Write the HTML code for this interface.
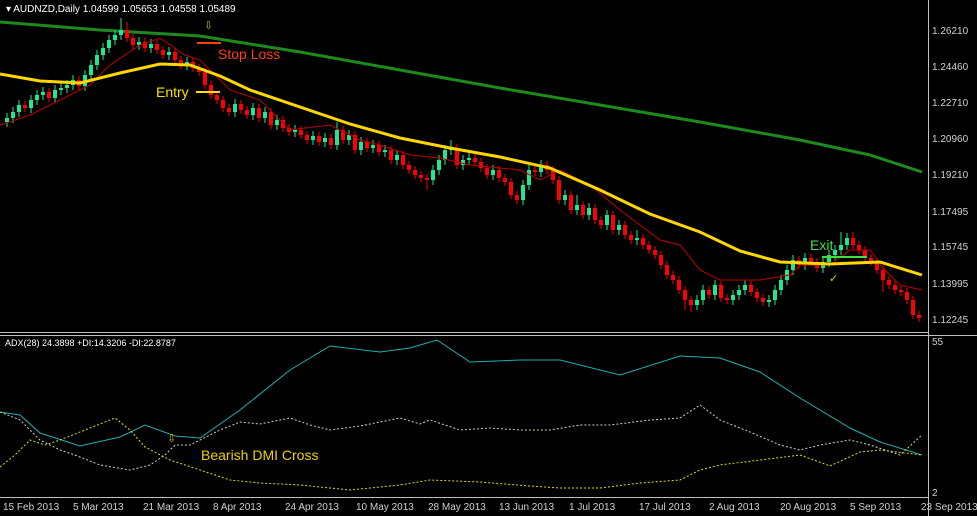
<!DOCTYPE html>
<html><head><meta charset="utf-8"><style>
html,body{margin:0;padding:0;background:#000;width:977px;height:516px;overflow:hidden}
svg{display:block}
text{font-family:"Liberation Sans",sans-serif;}
</style></head><body>
<svg width="977" height="516" viewBox="0 0 977 516" xmlns="http://www.w3.org/2000/svg">
<rect width="977" height="516" fill="#000"/>
<polyline fill="none" stroke="#1e8a1e" stroke-width="3" points="0,22 100,30 200,36 300,52 400,70 500,88 600,105 700,122 800,140 870,155 922,172"/>
<g fill="none">
<path stroke="#1fe890" stroke-width="1" d="M7 113V127M13 107V123M19 100V117M31 95V113M37 90V105M43 87V100M55 85V103M61 83V95M67 80V93M73 75V90M85 70V91M91 60V80M97 50V70M103 43V60M109 35V53M115 30V45M121 18V40M139 37V50M151 39V53M169 47V60M187 57V70M235 99V117M253 103V120M265 107V123M277 115V130M295 125V137M313 131V145M325 133V147M337 122V150M349 130V145M361 137V155M373 140V153M385 145V157M397 150V165M433 165V185M439 155V175M445 145V165M451 140V155M463 155V170M469 153V165M493 165V180M523 180V205M529 165V190M541 160V177M565 190V205M577 195V215M589 203V220M607 210V230M619 220V235M637 230V245M697 295V310M703 285V305M715 280V300M733 290V305M739 285V300M745 280V295M769 295V307M775 285V305M781 275V295M787 265V285M793 255V275M805 253V270M823 257V273M829 250V267M835 245V260M841 232V255M847 233V250"/>
<path stroke="#1fe890" stroke-width="4" d="M7 118V122M13 112V118M19 105V112M31 100V108M37 95V100M43 92V95M55 90V98M61 88V90M67 85V88M73 80V85M85 75V86M91 65V75M97 55V65M103 48V55M109 40V48M115 35V40M121 30V35M139 42V45M151 44V48M169 52V55M187 62V65M235 104V112M253 108V115M265 112V118M277 120V125M295 130V132M313 136V140M325 138V142M337 130V145M349 135V140M361 142V150M373 145V148M385 150V152M397 155V160M433 170V180M439 160V170M445 150V160M451 148V150M463 160V165M469 158V160M493 170V175M523 185V200M529 170V185M541 165V172M565 195V200M577 205V210M589 208V215M607 215V225M619 225V230M637 238V240M697 300V305M703 290V300M715 285V295M733 295V300M739 290V295M745 285V290M769 300V302M775 290V300M781 280V290M787 270V280M793 260V270M805 258V265M823 262V268M829 255V262M835 250V255M841 245V250M847 238V245"/>
<path stroke="#ff0000" stroke-width="1" d="M25 101V112M49 88V102M79 76V90M127 22V42M133 34V49M145 38V52M157 40V54M163 46V59M175 48V64M181 56V69M193 58V72M199 64V76M205 68V89M211 81V99M217 91V104M223 96V112M229 104V116M241 100V114M247 106V119M259 104V122M271 108V129M283 116V132M289 124V136M301 126V139M307 131V144M319 132V146M331 134V149M343 126V144M355 131V154M367 138V152M379 141V156M391 146V164M403 151V169M409 161V174M415 166V179M421 171V182M427 174V190M457 144V169M475 154V166M481 158V172M487 164V179M499 166V182M505 174V186M511 178V199M517 191V204M535 166V176M547 161V174M553 166V184M559 176V204M571 191V214M583 201V219M595 204V224M601 216V229M613 211V234M625 221V239M631 231V244M643 234V249M649 241V254M655 246V259M661 251V269M667 261V279M673 271V284M679 276V294M685 286V310M691 296V312M709 286V299M721 281V302M727 294V304M751 281V296M757 288V302M763 294V306M799 256V269M811 254V266M817 258V272M853 232V249M859 241V254M865 246V262M871 254V266M877 258V274M883 266V292M889 276V289M895 281V294M901 286V296M907 288V304M913 296V319M919 311V322"/>
<path stroke="#ff0000" stroke-width="4" d="M25 105V108M49 92V98M79 80V86M127 30V38M133 38V45M145 42V48M157 44V50M163 50V55M175 52V60M181 60V65M193 62V68M199 68V72M205 72V85M211 85V95M217 95V100M223 100V108M229 108V112M241 104V110M247 110V115M259 108V118M271 112V125M283 120V128M289 128V132M301 130V135M307 135V140M319 136V142M331 138V145M343 130V140M355 135V150M367 142V148M379 145V152M391 150V160M403 155V165M409 165V170M415 170V175M421 175V178M427 178V180M457 148V165M475 158V162M481 162V168M487 168V175M499 170V178M505 178V182M511 182V195M517 195V200M535 170V172M547 165V170M553 170V180M559 180V200M571 195V210M583 205V215M595 208V220M601 220V225M613 215V230M625 225V235M631 235V240M643 238V245M649 245V250M655 250V255M661 255V265M667 265V275M673 275V280M679 280V290M685 290V300M691 300V305M709 290V295M721 285V298M727 298V300M751 285V292M757 292V298M763 298V302M799 260V265M811 258V262M817 262V268M853 238V245M859 245V250M865 250V258M871 258V262M877 262V270M883 270V280M889 280V285M895 285V290M901 290V292M907 292V300M913 300V315M919 315V318"/>
</g>
<polyline fill="none" stroke="#c00000" stroke-width="1" points="0,125 30,115 60,100 90,85 110,65 140,45 160,38 185,55 200,60 230,90 260,100 290,130 330,125 360,140 380,145 410,155 440,158 470,165 520,170 540,180 560,170 590,185 620,210 640,225 660,240 680,245 700,270 720,280 760,280 790,275 800,265 830,265 850,250 870,250 885,270 900,285 922,290"/>
<polyline fill="none" stroke="#ffd700" stroke-width="3" points="0,74 40,81 80,83 120,73 160,64 190,65 220,76 250,90 300,107 350,124 400,138 450,148 500,157 550,168 600,190 650,214 700,232 740,251 780,262 830,264 880,262 922,275"/>
<text x="204" y="29" fill="#c8b400" font-size="11">⇩</text>
<rect x="197" y="42" width="24" height="2" fill="#ff4010"/>
<text x="218" y="59" fill="#ff4010" font-size="14">Stop Loss</text>
<rect x="196" y="91" width="24" height="2" fill="#ffe000"/>
<text x="156" y="97" fill="#ffe000" font-size="14">Entry</text>
<text x="810" y="250" fill="#40e040" font-size="14">Exit</text>
<rect x="822" y="256" width="45" height="2" fill="#40e040"/>
<text x="829" y="282" fill="#e0d000" font-size="11">✓</text>
<rect x="928" y="0" width="1" height="516" fill="#c0c0c0"/>
<rect x="0" y="332" width="928" height="1" fill="#c0c0c0"/>
<rect x="0" y="335" width="977" height="1" fill="#c0c0c0"/>
<rect x="0" y="497" width="928" height="1" fill="#c0c0c0"/>
<text x="6" y="12" fill="#fff" font-size="10">▾ AUDNZD,Daily  1.04599 1.05653 1.04558 1.05489</text>
<g fill="#d0d0d0" font-size="10">
<text x="932" y="34">1.26210</text><text x="932" y="70">1.24460</text><text x="932" y="106">1.22710</text>
<text x="932" y="142">1.20960</text><text x="932" y="178">1.19210</text><text x="932" y="215">1.17495</text>
<text x="932" y="250">1.15745</text><text x="932" y="287">1.13995</text><text x="932" y="323">1.12245</text>
<text x="932" y="345">55</text><text x="932" y="496">2</text>
</g>
<text x="5" y="346" fill="#fff" font-size="9">ADX(28) 24.3898 +DI:14.3206 -DI:22.8787</text>
<polyline fill="none" stroke="#20b0b0" stroke-width="1" points="0,412 20,415 40,433 80,446 120,437 145,425 175,436 200,438 240,410 290,370 330,346 380,352 410,348 437,340 470,362 520,360 560,360 620,375 680,356 720,358 760,372 800,398 850,428 880,442 922,455"/>
<polyline fill="none" stroke="#e0e000" stroke-width="1" stroke-dasharray="2,2" points="0,467 15,455 30,440 45,445 60,440 85,430 100,424 115,418 130,430 145,447 170,460 200,470 230,480 260,483 300,485 330,488 350,490 380,487 400,485 430,480 480,482 530,486 560,488 600,488 640,483 680,480 700,470 720,465 760,460 800,455 830,466 860,452 880,450 922,455"/>
<polyline fill="none" stroke="#d8d0b0" stroke-width="1" stroke-dasharray="2,2" points="0,412 20,420 40,440 60,450 75,455 100,465 130,470 150,465 165,455 175,445 190,445 200,440 220,430 240,422 260,424 290,418 310,425 330,430 360,426 380,422 400,418 420,424 430,420 460,430 490,428 520,430 550,430 580,425 610,425 650,420 680,418 700,405 720,420 750,432 780,445 800,450 820,445 850,440 870,445 900,455 922,435"/>
<text x="167" y="442" fill="#e0b000" font-size="11">⇩</text>
<text x="201" y="460" fill="#f0d000" font-size="14">Bearish DMI Cross</text>
<g fill="#d0d0d0" font-size="10">
<text x="3" y="510">15 Feb 2013</text><text x="73" y="510">5 Mar 2013</text><text x="143" y="510">21 Mar 2013</text>
<text x="213" y="510">8 Apr 2013</text><text x="285" y="510">24 Apr 2013</text><text x="356" y="510">10 May 2013</text>
<text x="428" y="510">28 May 2013</text><text x="499" y="510">13 Jun 2013</text><text x="569" y="510">1 Jul 2013</text>
<text x="639" y="510">17 Jul 2013</text><text x="709" y="510">2 Aug 2013</text><text x="780" y="510">20 Aug 2013</text>
<text x="850" y="510">5 Sep 2013</text><text x="921" y="510">23 Sep 2013</text>
</g>
</svg>
</body></html>
